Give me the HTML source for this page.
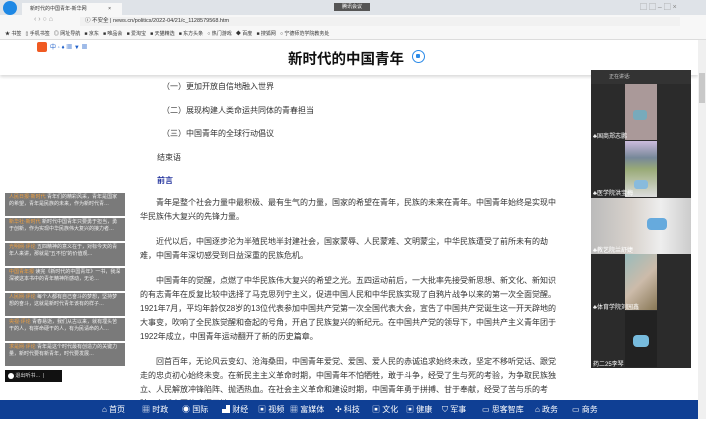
<!DOCTYPE html>
<html><head><meta charset="utf-8"><style>
*{margin:0;padding:0;box-sizing:border-box}
body{width:706px;height:419px;overflow:hidden;background:#fff;font-family:"Liberation Sans","Noto Sans CJK SC",sans-serif;position:relative}
.abs{position:absolute}
.tabbar{left:0;top:0;width:706px;height:15px;background:#dfe3e8}
.addr{left:0;top:15px;width:706px;height:13px;background:#f7f7f7}
.bm{left:0;top:28px;width:706px;height:12px;background:#f7f7f7;border-bottom:1px solid #ddd;font-size:5px;color:#333;white-space:nowrap}
.hdr{left:0;top:40px;width:698px;height:35px;background:#fff;box-shadow:0 2px 3px rgba(0,0,0,.15)}
.txt{left:140px;width:422px;font-size:8px;line-height:14px;color:#333}
.txt p{text-indent:2em;margin-bottom:11px}
.sub{position:absolute;font-size:8px;color:#333}
.lb{position:absolute;left:5px;width:120px;height:23px;overflow:hidden;background:#7a7a7a;color:#eee;font-size:5px;line-height:7px;padding:1px 4px}
.lb span{color:#f0a040}
.nav{left:0;top:400px;width:698px;height:19px;background:#0f3f94;color:#fff;font-size:8px;line-height:19px;white-space:nowrap}
.nav i{font-style:normal;position:absolute;top:0}
.vp{left:591px;top:70px;width:100px;height:298px;background:#2b2b2b}
.tile{position:absolute;left:34px;width:32px;height:56px}
.nm{position:absolute;left:2px;font-size:6px;color:#fff}
.sb{left:698px;top:40px;width:8px;height:379px;background:#f0f0f0}
</style></head><body>
<div class="abs tabbar"></div>
<div class="abs" style="left:3px;top:1px;width:14px;height:14px;border-radius:50%;background:#1e88e5"></div>
<div class="abs" style="left:22px;top:3px;width:100px;height:12px;background:#f7f7f7;font-size:5px;line-height:12px;padding-left:8px;color:#333">新时代的中国青年-新华网 <span style="margin-left:20px">×</span></div>
<div class="abs" style="left:334px;top:3px;width:36px;height:8px;background:#555;font-size:5px;color:#fff;text-align:center;line-height:8px">腾讯会议</div>
<div class="abs" style="left:640px;top:2px;font-size:7px;color:#888">▢ ▢ – ▢ ×</div>
<div class="abs addr"><div class="abs" style="left:80px;top:2px;width:600px;height:9px;background:#f1f1f1;font-size:5.5px;line-height:9px;color:#333;padding-left:5px">ⓘ 不安全 | news.cn/politics/2022-04/21/c_1128579568.htm</div><div class="abs" style="left:34px;top:1px;font-size:7px;color:#999">‹ › ○ ⌂</div></div>
<div class="abs bm"><span style="margin-left:5px;line-height:12px">★ 书签 &nbsp; ▯ 手机书签 &nbsp; ◎ 网址导航 &nbsp; ■ 京东 &nbsp; ■ 唯品会 &nbsp; ■ 爱淘宝 &nbsp; ■ 天猫精选 &nbsp; ■ 东方头条 &nbsp; ○ 热门游戏 &nbsp; ◆ 百度 &nbsp; ■ 搜狐网 &nbsp; ○ 宁德师范学院教务处</span></div>
<div class="abs hdr"></div>
<div class="abs" style="left:37px;top:42px;width:10px;height:10px;background:#f05a22;border-radius:2px"></div>
<div class="abs" style="left:50px;top:42px;font-size:6px;color:#1e5fc9">中 ◦ ♦ ▦ ▼ ▦</div>
<div class="abs" style="left:288px;top:48px;font-size:14.5px;font-weight:bold;color:#111">新时代的中国青年</div>
<div class="abs" style="left:412px;top:50px;width:13px;height:13px;border-radius:50%;border:1.5px solid #2a8ae8;background:#fff"><div style="margin:3px 0 0 3px;width:4px;height:4px;background:#2a8ae8;border-radius:1px"></div></div>
<div class="sub" style="left:162px;top:81px">（一）更加开放自信地融入世界</div>
<div class="sub" style="left:162px;top:105px">（二）展现构建人类命运共同体的青春担当</div>
<div class="sub" style="left:162px;top:128px">（三）中国青年的全球行动倡议</div>
<div class="sub" style="left:157px;top:152px">结束语</div>
<div class="sub" style="left:157px;top:175px;color:#2a3aa0;font-weight:bold">前言</div>
<div class="abs txt" style="top:196px">
<p>青年是整个社会力量中最积极、最有生气的力量，国家的希望在青年，民族的未来在青年。中国青年始终是实现中华民族伟大复兴的先锋力量。</p>
<p>近代以后，中国逐步沦为半殖民地半封建社会，国家蒙辱、人民蒙难、文明蒙尘，中华民族遭受了前所未有的劫难，中国青年深切感受到日益深重的民族危机。</p>
<p>中国青年的觉醒，点燃了中华民族伟大复兴的希望之光。五四运动前后，一大批率先接受新思想、新文化、新知识的有志青年在反复比较中选择了马克思列宁主义，促进中国人民和中华民族实现了自鸦片战争以来的第一次全面觉醒。1921年7月，平均年龄仅28岁的13位代表参加中国共产党第一次全国代表大会，宣告了中国共产党诞生这一开天辟地的大事变，吹响了全民族觉醒和奋起的号角，开启了民族复兴的新纪元。在中国共产党的领导下，中国共产主义青年团于1922年成立，中国青年运动翻开了新的历史篇章。</p>
<p>回首百年，无论风云变幻、沧海桑田，中国青年爱党、爱国、爱人民的赤诚追求始终未改，坚定不移听党话、跟党走的忠贞初心始终未变。在新民主主义革命时期，中国青年不怕牺牲，敢于斗争，经受了生与死的考验，为争取民族独立、人民解放冲锋陷阵、抛洒热血。在社会主义革命和建设时期，中国青年勇于拼搏、甘于奉献，经受了苦与乐的考验，在新中国的广阔天地</p>
</div>
<div class="lb" style="top:193px"><span>人民日报·新时代</span> 青年们的精彩风采，青年是国家的希望，青年是民族的未来，作为新时代青…</div>
<div class="lb" style="top:218px"><span>新华社·新时代</span> 新时代中国青年只要勇于担当，勇于创新，作为实现中华民族伟大复兴的接力者…</div>
<div class="lb" style="top:243px"><span>光明网·评论</span> 五四精神的意义在于，对标今天的青年人来讲，那就是"五不怕"的价值观…</div>
<div class="lb" style="top:268px"><span>中国青年报</span> 读完《新时代的中国青年》一书，我深深被这本书中的青年精神所感动，无论…</div>
<div class="lb" style="top:293px"><span>人民网·评论</span> 每个人都有自己奋斗的梦想，坚持梦想的奋斗，这就是新时代青年该有的样子…</div>
<div class="lb" style="top:318px"><span>央视·评论</span> 青春易逝，我们从古以来，就有埋头苦干的人，有拼命硬干的人，有为民请命的人…</div>
<div class="lb" style="top:343px"><span>求是网·评论</span> 青年是这个时代最有创造力的关键力量，新时代要有新青年，时代要发展…</div>
<div class="abs" style="left:5px;top:370px;width:57px;height:12px;background:#111;font-size:5px;color:#ddd;line-height:12px;padding-left:3px"><span style="display:inline-block;width:6px;height:6px;border-radius:50%;background:#fff;vertical-align:middle"></span> 退出听书… &nbsp;|</div>
<div class="abs vp">
<div class="abs" style="left:0;top:0;width:100px;height:14px;background:#333;font-size:5px;color:#ccc;line-height:14px;padding-left:18px">正在讲话:</div>
<div class="tile" style="top:14px;background:#a99;"></div><div class="abs" style="left:42px;top:40px;width:14px;height:10px;background:#7ab;border-radius:3px"></div>
<div class="nm" style="top:61px">♣国商郑志鹏</div>
<div class="tile" style="top:71px;background:linear-gradient(#cbd 0,#789 30%,#9a7 50%,#ddd 100%)"></div><div class="abs" style="left:43px;top:110px;width:14px;height:9px;background:#8bd;border-radius:3px"></div>
<div class="nm" style="top:118px">♣医学院洪宝梅</div>
<div class="abs" style="left:0;top:128px;width:100px;height:56px;background:linear-gradient(90deg,#bbb,#d8d2cc 40%,#eee 70%,#ccc)"></div><div class="abs" style="left:56px;top:148px;width:20px;height:12px;background:#6ad;border-radius:4px"></div>
<div class="nm" style="top:175px">♣教艺院兰舒婕</div>
<div class="tile" style="top:184px;background:linear-gradient(135deg,#9bb,#cba 50%,#875)"></div>
<div class="nm" style="top:232px">♣体育学院刘园鑫</div>
<div class="tile" style="top:241px;background:#222"></div><div class="abs" style="left:42px;top:265px;width:16px;height:12px;background:#7bd;border-radius:4px"></div>
<div class="nm" style="top:289px">药二25李琴</div>
</div>
<div class="abs sb"><div class="abs" style="left:1px;top:33px;width:6px;height:30px;background:#c8c8c8"></div></div>
<div class="abs nav">
<i style="left:102px">⌂ 首页</i><i style="left:142px">▦ 时政</i><i style="left:182px">◉ 国际</i><i style="left:222px">▟ 财经</i><i style="left:258px">▣ 视频</i><i style="left:290px">▦ 富媒体</i><i style="left:335px">✣ 科技</i><i style="left:372px">▣ 文化</i><i style="left:406px">▣ 健康</i><i style="left:442px">⛉ 军事</i><i style="left:482px">▭ 思客智库</i><i style="left:535px">⌂ 政务</i><i style="left:572px">▭ 商务</i>
</div>
</body></html>
